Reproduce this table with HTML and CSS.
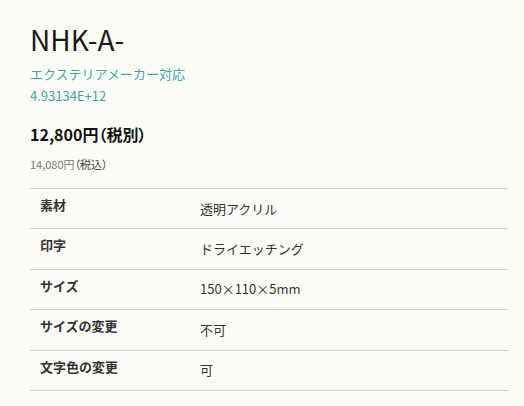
FILE: index.html
```html
<!DOCTYPE html>
<html lang="ja">
<head>
<meta charset="utf-8">
<link rel="stylesheet" href="styles.css">
</head>
<body>
<div class="product">
  <h1 class="title">NHK-A-</h1>
  <p class="sub">エクステリアメーカー対応</p>
  <p class="sub">4.93134E+12</p>
  <p class="price">12,800円（税別）</p>
  <p class="price-tax"><span class="amount">14,080円</span>（税込）</p>
  <table class="spec">
    <tr><th>素材</th><td>透明アクリル</td></tr>
    <tr><th>印字</th><td>ドライエッチング</td></tr>
    <tr><th>サイズ</th><td>150×110×5mm</td></tr>
    <tr><th>サイズの変更</th><td>不可</td></tr>
    <tr><th>文字色の変更</th><td>可</td></tr>
  </table>
</div>
</body>
</html>
```

FILE: styles.css
```css
html, body {
  margin: 0;
  padding: 0;
  background: #fdfdf8;
}
body {
  font-family: "Noto Sans CJK JP", "Noto Sans", sans-serif;
  color: #333;
}
.product {
  padding: 19px 16px 0 30px;
}
.title {
  margin: 0 0 4px;
  font-size: 28px;
  font-weight: 400;
  line-height: 40px;
  color: #1a1a1a;
}
.sub {
  margin: 0;
  font-size: 13px;
  line-height: 22px;
  color: #3fa6a0;
}
.price {
  margin: 14px 0 0;
  font-size: 16px;
  font-weight: 700;
  line-height: 26px;
  color: #111;
  font-feature-settings: "palt";
}
.price-tax {
  margin: 8px 0 0;
  font-size: 11px;
  line-height: 18px;
  color: #444;
  font-feature-settings: "palt";
}
.amount {
  color: #777;
}
.spec {
  margin-top: 15px;
  width: 478px;
  border-collapse: collapse;
  border-top: 1px solid #cfcfcc;
}
.spec tr {
  border-bottom: 1px solid #cfcfcc;
  height: 40.4px;
}
.spec th {
  width: 160px;
  padding: 6px 0 0 10px;
  text-align: left;
  vertical-align: top;
  font-size: 13px;
  font-weight: 700;
  line-height: 20px;
  color: #333;
}
.spec td {
  padding: 0;
  vertical-align: middle;
  font-size: 13px;
  line-height: 20px;
  color: #333;
}
```
